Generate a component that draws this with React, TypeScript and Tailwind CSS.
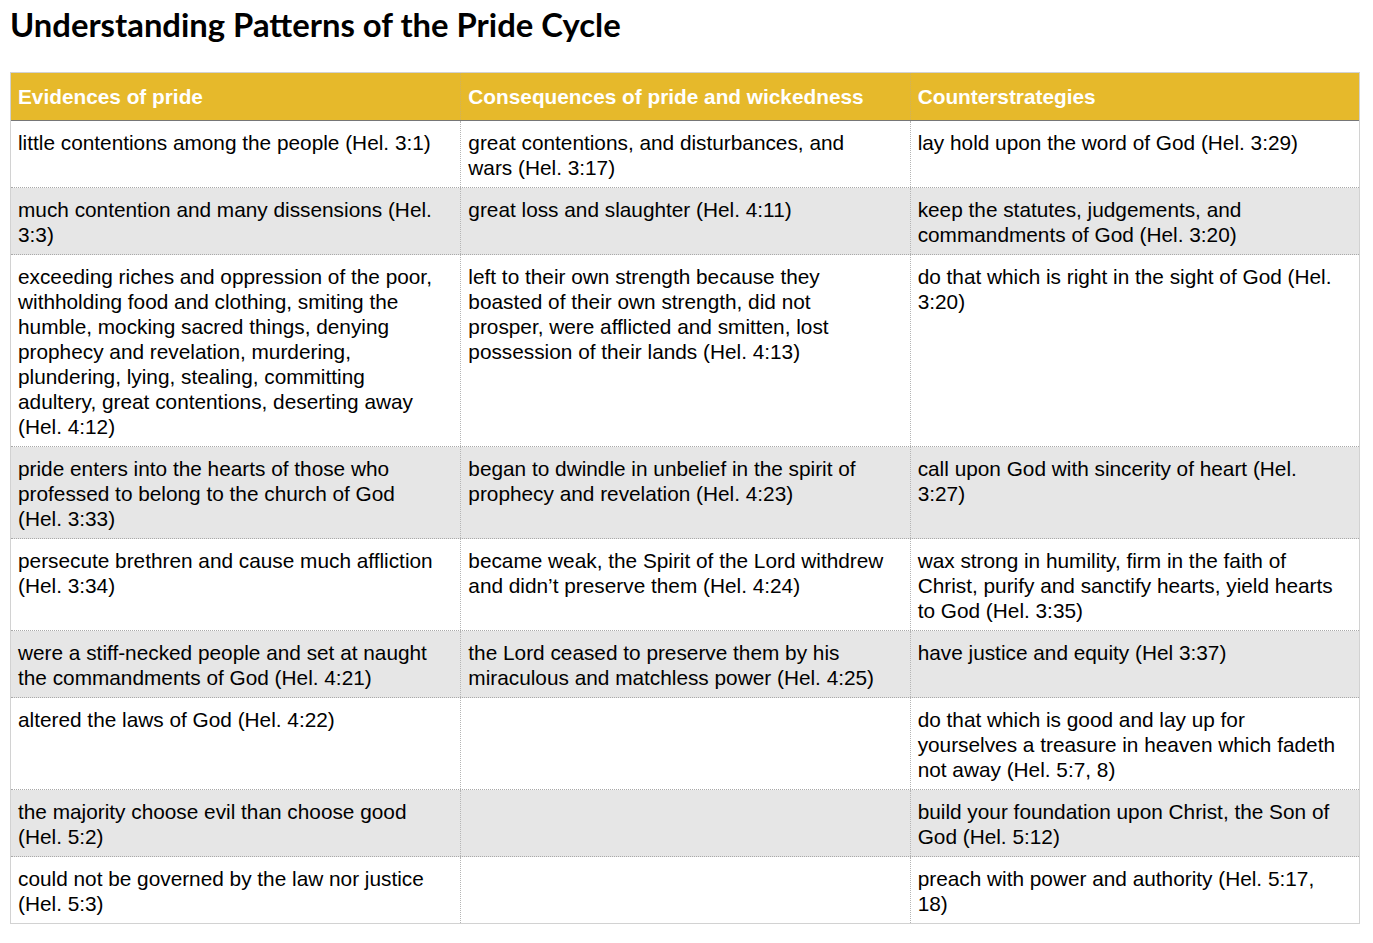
const rows: [string, string, string][] = [
  ['little contentions among the people (Hel. 3:1)', 'great contentions, and disturbances, and wars (Hel. 3:17)', 'lay hold upon the word of God (Hel. 3:29)'],
  ['much contention and many dissensions (Hel. 3:3)', 'great loss and slaughter (Hel. 4:11)', 'keep the statutes, judgements, and commandments of God (Hel. 3:20)'],
  [
    'exceeding riches and oppression of the poor, withholding food and clothing, smiting the humble, mocking sacred things, denying prophecy and revelation, murdering, plundering, lying, stealing, committing adultery, great contentions, deserting away (Hel. 4:12)',
    'left to their own strength because they boasted of their own strength, did not prosper, were afflicted and smitten, lost possession of their lands (Hel. 4:13)',
    'do that which is right in the sight of God (Hel. 3:20)',
  ],
  ['pride enters into the hearts of those who professed to belong to the church of God (Hel. 3:33)', 'began to dwindle in unbelief in the spirit of prophecy and revelation (Hel. 4:23)', 'call upon God with sincerity of heart (Hel. 3:27)'],
  ['persecute brethren and cause much affliction (Hel. 3:34)', 'became weak, the Spirit of the Lord withdrew and didn\u2019t preserve them (Hel. 4:24)', 'wax strong in humility, firm in the faith of Christ, purify and sanctify hearts, yield hearts to God (Hel. 3:35)'],
  ['were a stiff-necked people and set at naught the commandments of God (Hel. 4:21)', 'the Lord ceased to preserve them by his miraculous and matchless power (Hel. 4:25)', 'have justice and equity (Hel 3:37)'],
  ['altered the laws of God (Hel. 4:22)', '', 'do that which is good and lay up for yourselves a treasure in heaven which fadeth not away (Hel. 5:7, 8)'],
  ['the majority choose evil than choose good (Hel. 5:2)', '', 'build your foundation upon Christ, the Son of God (Hel. 5:12)'],
  ['could not be governed by the law nor justice (Hel. 5:3)', '', 'preach with power and authority (Hel. 5:17, 18)'],
]

const headers = ['Evidences of pride', 'Consequences of pride and wickedness', 'Counterstrategies']

export default function App() {
  return (
    <div className="min-h-[943px] bg-white px-[10px] pt-[5px] font-['Liberation_Sans',Arial,sans-serif] text-black">
      <h1 className="font-['Lato','Open_Sans',sans-serif] text-[32.8px] font-bold leading-[40px] mb-[27px]">
        Understanding Patterns of the Pride Cycle
      </h1>
      <div className="w-[1350px] border border-[#d2d2d2]">
        <div className="grid grid-cols-3 bg-[#e6b92b] border-b border-b-[#767676]">
          {headers.map((h, i) => (
            <div
              key={h}
              className={`h-[47px] flex items-center px-[7px] text-[20.8px] font-bold text-white ${i > 0 ? 'border-l border-dotted border-l-[#cdb060]' : ''}`}
            >
              {h}
            </div>
          ))}
        </div>
        {rows.map((r, ri) => (
          <div
            key={ri}
            className={`grid grid-cols-3 ${ri % 2 === 1 ? 'bg-[#e6e6e6]' : 'bg-white'} ${ri < rows.length - 1 ? 'border-b border-dotted border-b-[#a9a9a9]' : ''}`}
          >
            {r.map((c, ci) => (
              <div
                key={ci}
                className={`pl-[7px] pr-[20px] pt-[9px] pb-[7px] text-[20.8px] leading-[25px] ${ci > 0 ? 'border-l border-dotted border-l-[#b5b5b5]' : ''}`}
              >
                {c}
              </div>
            ))}
          </div>
        ))}
      </div>
    </div>
  )
}
